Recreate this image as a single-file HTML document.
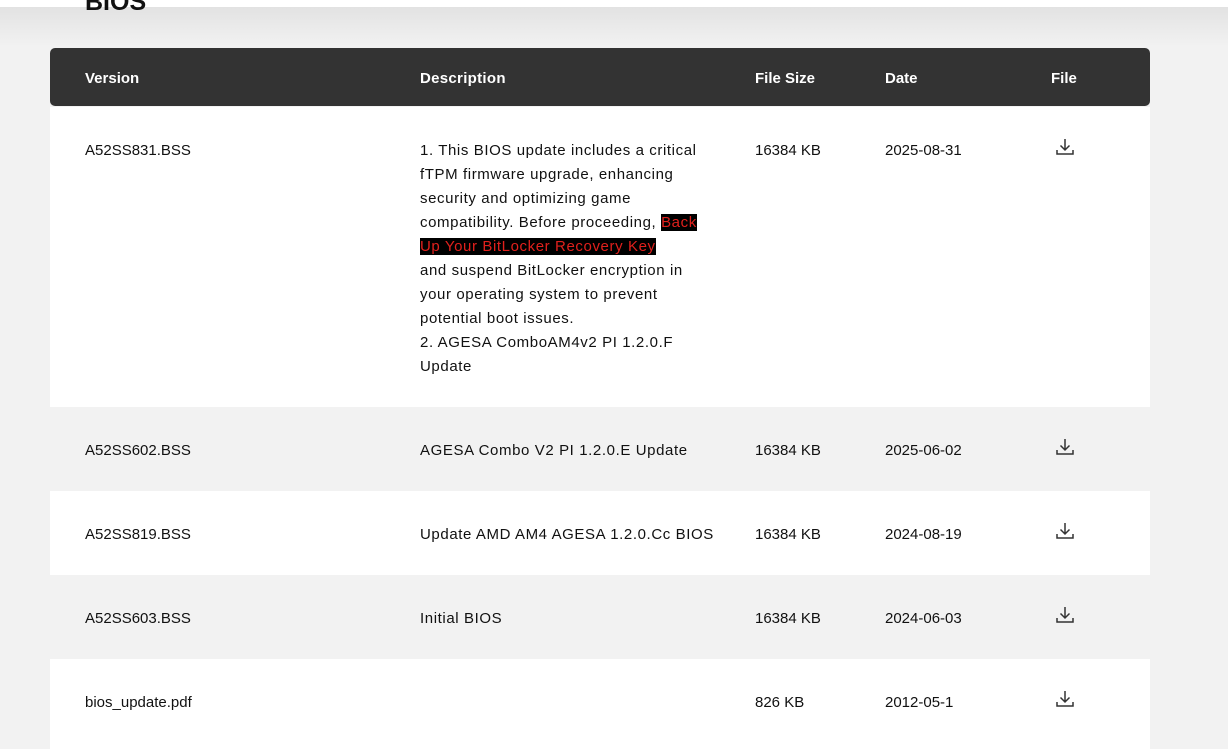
<!DOCTYPE html><html><head><style>
body{margin:0;width:1228px;height:741px;overflow:hidden;background:#f2f2f2;font-family:"Liberation Sans",sans-serif;position:relative}
.top{position:absolute;left:0;top:0;width:1228px;height:7px;background:#fff}
.sh{position:absolute;left:0;top:7px;width:1228px;height:40px;background:linear-gradient(#e2e2e2,#f2f2f2)}
h2{position:absolute;left:85px;top:-12px;margin:0;font-size:25px;font-weight:bold;color:#111}
.hd{position:absolute;left:50px;top:48px;width:1100px;height:58px;background:#333;border-radius:5px;color:#fff;font-weight:bold;font-size:15px}
.hd span,.r span{position:absolute}
.hd span{top:22px}
.r{position:absolute;left:50px;width:1100px;font-size:15px;color:#111;line-height:24px}
.r span{top:32px;white-space:nowrap}
.c1{left:35px}.c2{left:370px;letter-spacing:0.6px}.c3{left:705px}.c4{left:835px}.c5{left:1005px}
.hd .c2{letter-spacing:0.3px}
.hl{background:#000;color:#e0201c;font-weight:normal}
svg{position:absolute}
</style></head><body>
<div class="top"></div><div class="sh"></div>
<h2>BIOS</h2>
<div class="hd"><span class="c1">Version</span><span class="c2">Description</span><span class="c3">File Size</span><span class="c4">Date</span><span class="c5" style="left:1001px">File</span></div>
<div class="r" style="top:107px;height:300px;background:#fff"><span class="c1">A52SS831.BSS</span><span class="c2">1. This BIOS update includes a critical<br>fTPM firmware upgrade, enhancing<br>security and optimizing game<br>compatibility. Before proceeding, <b class="hl">Back</b><br><b class="hl">Up Your BitLocker Recovery Key</b><br>and suspend BitLocker encryption in<br>your operating system to prevent<br>potential boot issues.<br>2. AGESA ComboAM4v2 PI 1.2.0.F<br>Update</span><span class="c3">16384 KB</span><span class="c4">2025-08-31</span>
<svg style="left:1006px;top:31px" width="18" height="18" viewBox="0 0 18 18" fill="none" stroke="#333" stroke-width="1.5"><path d="M9 1v11M4.5 7.5L9 12l4.5-4.5M1 12v4h16v-4"/></svg></div>
<div class="r" style="top:407px;height:84px"><span class="c1">A52SS602.BSS</span><span class="c2">AGESA Combo V2 PI 1.2.0.E Update</span><span class="c3">16384 KB</span><span class="c4">2025-06-02</span>
<svg style="left:1006px;top:31px" width="18" height="18" viewBox="0 0 18 18" fill="none" stroke="#333" stroke-width="1.5"><path d="M9 1v11M4.5 7.5L9 12l4.5-4.5M1 12v4h16v-4"/></svg></div>
<div class="r" style="top:491px;height:84px;background:#fff"><span class="c1">A52SS819.BSS</span><span class="c2">Update AMD AM4 AGESA 1.2.0.Cc BIOS</span><span class="c3">16384 KB</span><span class="c4">2024-08-19</span>
<svg style="left:1006px;top:31px" width="18" height="18" viewBox="0 0 18 18" fill="none" stroke="#333" stroke-width="1.5"><path d="M9 1v11M4.5 7.5L9 12l4.5-4.5M1 12v4h16v-4"/></svg></div>
<div class="r" style="top:575px;height:84px"><span class="c1">A52SS603.BSS</span><span class="c2">Initial BIOS</span><span class="c3">16384 KB</span><span class="c4">2024-06-03</span>
<svg style="left:1006px;top:31px" width="18" height="18" viewBox="0 0 18 18" fill="none" stroke="#333" stroke-width="1.5"><path d="M9 1v11M4.5 7.5L9 12l4.5-4.5M1 12v4h16v-4"/></svg></div>
<div class="r" style="top:659px;height:90px;background:#fff"><span class="c1">bios_update.pdf</span><span class="c3">826 KB</span><span class="c4">2012-05-1</span>
<svg style="left:1006px;top:31px" width="18" height="18" viewBox="0 0 18 18" fill="none" stroke="#333" stroke-width="1.5"><path d="M9 1v11M4.5 7.5L9 12l4.5-4.5M1 12v4h16v-4"/></svg></div>
</body></html>
